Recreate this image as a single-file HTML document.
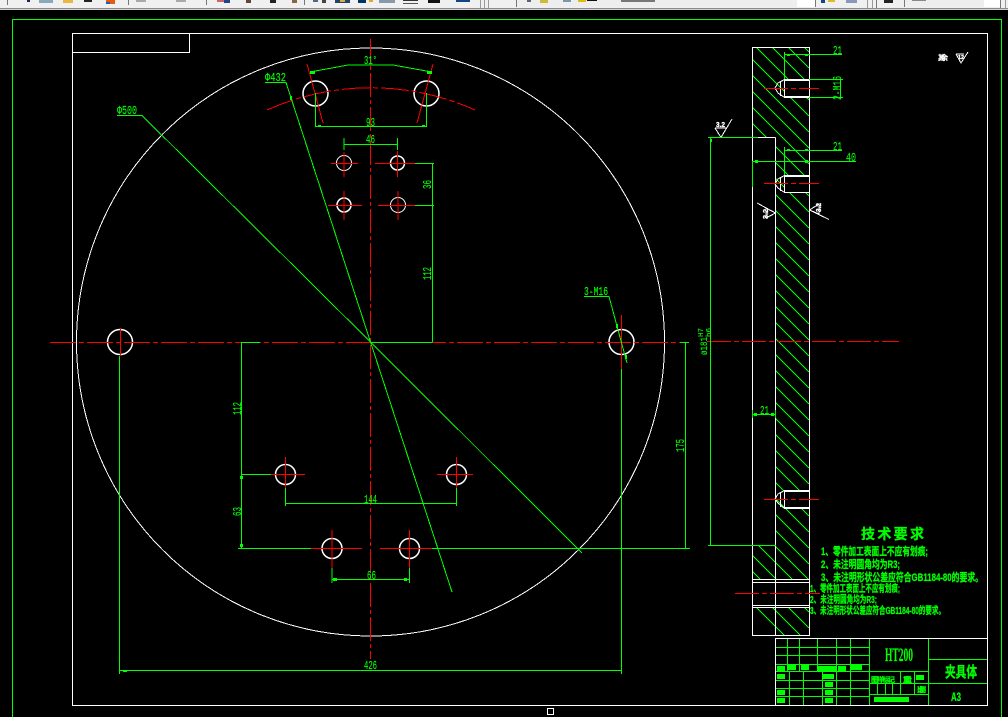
<!DOCTYPE html>
<html><head><meta charset="utf-8"><style>
html,body{margin:0;padding:0;background:#000;width:1008px;height:717px;overflow:hidden}
svg{display:block}
text{font-family:"Liberation Mono","Noto Sans CJK SC",monospace;fill:#0f0;stroke:#0f0;stroke-width:.15}
.c{font-family:"Liberation Sans","Noto Sans CJK SC",sans-serif;font-weight:700;stroke-width:.3}
.w{fill:#fff;stroke:#fff}
</style></head><body>
<svg width="1008" height="717" viewBox="0 0 1008 717" xmlns="http://www.w3.org/2000/svg">
<defs>
<clipPath id="h"><path clip-rule="evenodd" d="M752 47H809V579H752ZM752 607H809V635H752ZM752 137H776V545H752ZM784 79H809V97H784ZM784 175H809V192H784ZM784 490H809V508H784Z"/></clipPath>
</defs>
<rect width="1008" height="717" fill="#000"/>
<!-- toolbar -->
<rect width="1008" height="8" fill="#f0f0f0"/>
<rect y="8" width="1008" height="1" fill="#8c8c8c"/>
<rect y="9" width="1008" height="1" fill="#d0d0d0"/>
<g shape-rendering="crispEdges">
<rect x="7" width="1" height="5" fill="#777"/><rect x="128" width="1" height="5" fill="#777"/><rect x="206" width="1" height="5" fill="#777"/><rect x="304" width="1" height="5" fill="#777"/>
<rect x="27" width="3" height="2" fill="#225"/><rect x="39" width="14" height="3" fill="#8ab"/>
<rect x="63" width="10" height="3" fill="#e8b840"/><rect x="84" width="8" height="2" fill="#222"/>
<rect x="106" width="9" height="4" fill="#e85a10"/><rect x="106" y="2" width="4" height="2" fill="#1860c0"/>
<rect x="136" width="10" height="2" fill="#aaa"/><rect x="176" width="10" height="2" fill="#aaa"/>
<rect x="217" width="7" height="2" fill="#c66"/><rect x="224" width="6" height="3" fill="#248"/>
<rect x="246" width="5" height="3" fill="#643"/><rect x="270" width="6" height="3" fill="#222"/><rect x="292" width="5" height="3" fill="#864"/>
<rect x="313" width="5" height="2" fill="#568"/><rect x="322" width="4" height="3" fill="#444"/>
<rect x="335" width="15" height="3" fill="#246"/><rect x="340" width="5" height="2" fill="#da4"/>
<rect x="358" width="8" height="3" fill="#036"/><rect x="369" width="4" height="2" fill="#da2"/>
<rect x="379" width="16" height="3" fill="#89a"/><rect x="403" y="0" width="15" height="1" fill="#333"/><rect x="403" y="3" width="15" height="1" fill="#555"/>
<rect x="428" width="12" height="3" fill="#111"/><rect x="456" width="14" height="2" fill="#148"/>
<rect x="480" width="1" height="8" fill="#999"/><rect x="484" width="1" height="8" fill="#999"/><rect x="488" width="1" height="8" fill="#999"/>
<rect x="516" width="1" height="7" fill="#777"/><rect x="517" width="280" height="7" fill="#eee"/><rect x="797" width="18" height="7" fill="#fff"/><rect x="815" width="1" height="7" fill="#777"/>
<rect x="527" width="4" height="2" fill="#567"/><rect x="540" width="8" height="3" fill="#cb3"/><rect x="563" width="8" height="2" fill="#79a"/><rect x="578" width="8" height="2" fill="#db1"/><rect x="587" width="10" height="1" fill="#111"/>
<rect x="621" width="34" height="2" fill="#777"/>
<rect x="821" width="4" height="3" fill="#148"/><rect x="828" width="7" height="2" fill="#db2"/><rect x="846" width="11" height="3" fill="#89b"/>
<rect x="867" width="1" height="8" fill="#999"/><rect x="872" width="1" height="8" fill="#999"/><rect x="876" width="1" height="8" fill="#777"/>
<rect x="884" width="9" height="3" fill="#222"/><rect x="904" width="1" height="7" fill="#777"/><rect x="905" width="79" height="7" fill="#eee"/><rect x="912" width="14" height="1" fill="#888"/><rect x="984" width="16" height="7" fill="#fff"/><rect x="1000" width="1" height="8" fill="#777"/><rect x="1005" width="1" height="8" fill="#999"/>
</g>
<!-- holes -->
<g stroke="#fff" fill="none">
<g stroke-width="1.5">
<circle cx="120" cy="342" r="12.5"/>
<circle cx="621.5" cy="342" r="12.5"/>
<circle cx="315.5" cy="93.5" r="12.5"/>
<circle cx="426.5" cy="93.5" r="12.5"/>
<circle cx="285.5" cy="474.5" r="10"/>
<circle cx="456.5" cy="474.5" r="10"/>
<circle cx="332" cy="548.5" r="10"/>
<circle cx="409.5" cy="548.5" r="10"/>
<circle cx="397.5" cy="163" r="7"/>
<circle cx="344" cy="205" r="7"/>
</g>
<circle cx="344" cy="163" r="7.5"/>
<circle cx="398" cy="205" r="7.5"/>
</g>
<g shape-rendering="crispEdges" fill="none">
<!-- frames -->
<path d="M12.5 717V19.5H1001.5V717" stroke="#0f0"/>
<path d="M72.5 705.5V33.5H987.5V705.5Z M72.5 52.5H189.5V33.5" stroke="#fff"/>
<rect x="547.5" y="708.5" width="6" height="6" stroke="#fff"/>
<!-- main circle -->
<circle cx="370.5" cy="342" r="294" stroke="#fff"/>
<!-- hatch -->
<path clip-path="url(#h)" stroke="#0f0" d="M752 -5l57 57M752 11l57 57M752 27l57 57M752 43l57 57M752 59l57 57M752 75l57 57M752 91l57 57M752 107l57 57M752 123l57 57M752 139l57 57M752 155l57 57M752 171l57 57M752 187l57 57M752 203l57 57M752 219l57 57M752 235l57 57M752 251l57 57M752 267l57 57M752 283l57 57M752 299l57 57M752 315l57 57M752 331l57 57M752 347l57 57M752 363l57 57M752 379l57 57M752 395l57 57M752 411l57 57M752 427l57 57M752 443l57 57M752 459l57 57M752 475l57 57M752 491l57 57M752 507l57 57M752 523l57 57M752 539l57 57M752 555l57 57M752 571l57 57M752 587l57 57M752 603l57 57"/>
<!-- side view white -->
<g stroke="#fff">
<path d="M752.5 635.5V47.5H809.5V635.5ZM775.5 137.5V545.5M758 137.5H775.5M775.5 545.5V635.5"/>
<path d="M752.5 579.5H809.5M752.5 582.5H809.5M752.5 605.5H809.5M752.5 607.5H809.5"/>
<path d="M809 79.5H784.5V97.5H809M809 80.5H784.5M809 96.5H784.5M784.5 79.5L778 83L775 88L778 93L784.5 97.5M780.5 81V96"/>
<path d="M809 175.5H784.5V192.5H809M809 176.5H784.5M784.5 175.5L778 179L775 184L778 188L784.5 192.5M780.5 177V191"/>
<path d="M809 490.5H784.5V508.5H809M809 491.5H784.5M809 507.5H784.5M784.5 490.5L778 494L775 499L778 503L784.5 508.5M780.5 492V507"/>
<!-- roughness -->
<path d="M956 54H964M956 54L961 63L968 52"/>
<path d="M715 128H727M715 128L721 137.5L732 119"/>
<path d="M757 203L775.5 213L766 218V208L775.5 213"/>
<path d="M829 219.5L809.5 210L819 204V214L809.5 210"/>
</g>
<!-- red -->
<g stroke="#f00">
<path stroke-dasharray="26 3 5 3" d="M50 342.5H680"/>
<path stroke-dasharray="24 3 4 3" d="M370.5 39V659"/>
<path stroke-dasharray="28 3 5 3" d="M267 110A254 254 0 0 1 475 110"/>
<path d="M307 64L323 123M433 64L417 123"/>
<path d="M331 163.5H358M344 152V177M375 163.5H415M397.5 151V177M328 205.5H362M344 191V220M378 205.5H415M398 191V220"/>
<path d="M271 474.5H305M285.5 457V488M437 474.5H473M456.5 457V488M311 548.5H362M332 530V568M380 548.5H432M409.5 530V568"/>
<path d="M120.5 328V356M621.5 315V369"/>
<path stroke-dasharray="24 3 5 3" d="M707 341.5H899"/>
<path stroke-dasharray="24 3 5 3" d="M735 593.5H820"/>
<path stroke-dasharray="24 3 5 3" d="M764 88.5H819M764 183.5H819M764 499.5H819"/>
</g>
<!-- green dims -->
<g stroke="#0f0">
<path d="M117 115.5H142L370.5 342L582 553"/>
<path d="M265 82.5H286L370.5 342L452 592"/>
<path d="M584 296.5H609L627 363"/>
<path d="M310 72L348 65H393L432 72"/>
<path d="M315.5 93V127M426.5 93V127M315.5 126.5H426.5"/>
<path d="M344 138V150M397.5 138V150M344 144.5H397.5"/>
<path d="M415 163.5H434M415 205.5H434M432.5 163V342M370 342.5H432.5"/>
<path d="M241 342.5H260M241.5 342V549M241 474.5H271M238 548.5H311M432 548.5H690M680 342.5H689M685.5 342V549"/>
<path d="M285.5 488V506M456.5 488V506M285.5 503.5H456.5"/>
<path d="M332 568V583M409.5 568V583M332 579.5H409.5"/>
<path d="M119.5 356V674M621.5 369V674M119.5 670.5H621.5"/>
<path d="M710.5 138V546M708 137.5H758M708 545.5H776"/>
<path d="M784.5 52V79M784.5 54.5H842M809 79.5H843M809 97.5H843M840.5 79V98"/>
<path d="M784.5 147V175M784.5 150.5H842M752 161.5H856M752.5 161V187"/>
<path d="M752 414.5H776M752.5 410V418M775.5 410V418"/>
</g>
<g fill="#0f0">
<rect x="310" y="71" width="5" height="3"/><rect x="427" y="71" width="5" height="3"/>
<rect x="318" y="125" width="3" height="2"/><rect x="422" y="125" width="3" height="2"/>
<rect x="240" y="476" width="3" height="3"/><rect x="240" y="544" width="3" height="3"/>
<rect x="333" y="578" width="4" height="3"/><rect x="404" y="578" width="3" height="3"/>
<rect x="123" y="671" width="4" height="1"/><rect x="685" y="344" width="1" height="3"/><rect x="710" y="139" width="2" height="3"/>
<rect x="755" y="160" width="3" height="3"/><rect x="805" y="160" width="3" height="3"/><rect x="754" y="413" width="3" height="3"/><rect x="771" y="413" width="3" height="3"/>
<rect x="787" y="54" width="3" height="2"/><rect x="805" y="54" width="3" height="2"/><rect x="787" y="149" width="3" height="2"/><rect x="805" y="149" width="3" height="2"/>
<rect x="625" y="355" width="2" height="4"/><rect x="616" y="324" width="2" height="4"/><rect x="290" y="96" width="2" height="4"/>
</g>
<!-- title block -->
<g stroke="#fff"><path d="M775.5 705V638.5H987"/></g>
<g stroke="#0f0">
<path d="M869.5 639V705M928.5 639V705M929 659.5H987M929 683.5H987M869 671.5H928M869 683.5H928M869 694.5H928"/>
<path d="M776 647.5H869M776 655.5H869M776 664.5H869M776 671.5H869M776 680.5H869M776 688.5H869M776 696.5H869"/>
<path d="M787.5 639V672M799.5 639V672M817.5 639V672M836.5 639V672M850.5 639V672"/>
<path d="M789.5 672V705M803.5 672V705M822.5 672V705M836.5 672V705M850.5 672V705"/>
<path d="M900.5 672V694M914.5 672V694M877.5 684V694M885.5 684V694M892.5 684V694"/>
</g>
<g fill="#0f0">
<rect x="777" y="666" width="8" height="6"/><rect x="788" y="665" width="8" height="5"/><rect x="801" y="665" width="8" height="5"/><rect x="817" y="666" width="19" height="6"/><rect x="838" y="666" width="8" height="6"/><rect x="851" y="665" width="11" height="5"/>
<rect x="777" y="674" width="8" height="5"/><rect x="823" y="674" width="11" height="5"/><rect x="825" y="682" width="8" height="5"/><rect x="777" y="690" width="8" height="5"/><rect x="825" y="690" width="8" height="5"/><rect x="777" y="698" width="8" height="5"/><rect x="825" y="698" width="8" height="5"/>
<rect x="916" y="675" width="8" height="5"/><rect x="874" y="697" width="35" height="5"/>
</g>
</g>
<!-- text -->
<text x="265" y="81" font-size="12" textLength="21" lengthAdjust="spacingAndGlyphs">Φ432</text>
<text x="117" y="114" font-size="12" textLength="20" lengthAdjust="spacingAndGlyphs">Φ500</text>
<text x="364" y="64" font-size="12" textLength="13" lengthAdjust="spacingAndGlyphs">31°</text>
<text x="366" y="126" font-size="12" textLength="9" lengthAdjust="spacingAndGlyphs">93</text>
<text x="366" y="143" font-size="12" textLength="9" lengthAdjust="spacingAndGlyphs">46</text>
<text x="364" y="503" font-size="12" textLength="13" lengthAdjust="spacingAndGlyphs">144</text>
<text x="367" y="579" font-size="12" textLength="9" lengthAdjust="spacingAndGlyphs">66</text>
<text x="364" y="669" font-size="12" textLength="13" lengthAdjust="spacingAndGlyphs">426</text>
<text x="584" y="295" font-size="12" textLength="24" lengthAdjust="spacingAndGlyphs">3-M16</text>
<text transform="translate(431 189) rotate(-90)" font-size="12" textLength="9" lengthAdjust="spacingAndGlyphs">36</text>
<text transform="translate(431 280) rotate(-90)" font-size="12" textLength="13" lengthAdjust="spacingAndGlyphs">112</text>
<text transform="translate(241 415) rotate(-90)" font-size="12" textLength="13" lengthAdjust="spacingAndGlyphs">112</text>
<text transform="translate(241 516) rotate(-90)" font-size="12" textLength="9" lengthAdjust="spacingAndGlyphs">63</text>
<text transform="translate(684 452) rotate(-90)" font-size="12" textLength="13" lengthAdjust="spacingAndGlyphs">175</text>
<text transform="translate(707 355) rotate(-90)" font-size="10" textLength="18" lengthAdjust="spacingAndGlyphs">ø181</text>
<text transform="translate(703 337) rotate(-90)" font-size="7" textLength="9" lengthAdjust="spacingAndGlyphs">H7</text>
<text transform="translate(711 337) rotate(-90)" font-size="7" textLength="9" lengthAdjust="spacingAndGlyphs">h6</text>
<text x="833" y="54" font-size="12" textLength="9" lengthAdjust="spacingAndGlyphs">21</text>
<text x="833" y="150" font-size="12" textLength="9" lengthAdjust="spacingAndGlyphs">21</text>
<text x="846" y="161" font-size="12" textLength="10" lengthAdjust="spacingAndGlyphs">40</text>
<text x="760" y="414" font-size="12" textLength="9" lengthAdjust="spacingAndGlyphs">21</text>
<text transform="translate(841 100) rotate(-90)" font-size="12" textLength="24" lengthAdjust="spacingAndGlyphs">2-M16</text>
<text class="c w" x="938" y="60" font-size="7" textLength="10">其余</text>
<text class="c w" x="958" y="59" font-size="5" textLength="6" lengthAdjust="spacingAndGlyphs">12</text>
<text class="c w" x="716" y="127" font-size="7" textLength="9" lengthAdjust="spacingAndGlyphs">3.2</text>
<text class="c w" transform="translate(768 219) rotate(-90)" font-size="7" textLength="10" lengthAdjust="spacingAndGlyphs">3.2</text>
<text class="c w" transform="translate(821 212) rotate(-90)" font-size="7" textLength="9" lengthAdjust="spacingAndGlyphs">3.2</text>
<text class="c" x="861" y="539" font-size="14" textLength="63">技术要求</text>
<text class="c" x="821" y="555" font-size="11" textLength="107" lengthAdjust="spacingAndGlyphs">1、零件加工表面上不应有划痕;</text>
<text class="c" x="821" y="568" font-size="11" textLength="79" lengthAdjust="spacingAndGlyphs">2、未注明圆角均为R3;</text>
<text class="c" x="821" y="581" font-size="11" textLength="162" lengthAdjust="spacingAndGlyphs">3、未注明形状公差应符合GB1184-80的要求。</text>
<text class="c" x="810" y="592" font-size="10" textLength="90" lengthAdjust="spacingAndGlyphs">1、零件加工表面上不应有划痕;</text>
<text class="c" x="810" y="603" font-size="10" textLength="67" lengthAdjust="spacingAndGlyphs">2、未注明圆角均为R3;</text>
<text class="c" x="810" y="614" font-size="10" textLength="135" lengthAdjust="spacingAndGlyphs">3、未注明形状公差应符合GB1184-80的要求。</text>
<text x="885" y="661" font-size="19" font-weight="700" textLength="28" lengthAdjust="spacingAndGlyphs" style="font-family:'Liberation Serif',serif">HT200</text>
<text class="c" x="945" y="677" font-size="15" textLength="32" lengthAdjust="spacingAndGlyphs">夹具体</text>
<text class="c" x="951" y="701" font-size="12" textLength="10" lengthAdjust="spacingAndGlyphs">A3</text>
<text class="c" x="871" y="682" font-size="7" textLength="24">图样标记</text>
<text class="c" x="903" y="682" font-size="7" textLength="9">重量</text>
<text class="c" x="917" y="692" font-size="7" textLength="9">比例</text>
</svg>
</body></html>
